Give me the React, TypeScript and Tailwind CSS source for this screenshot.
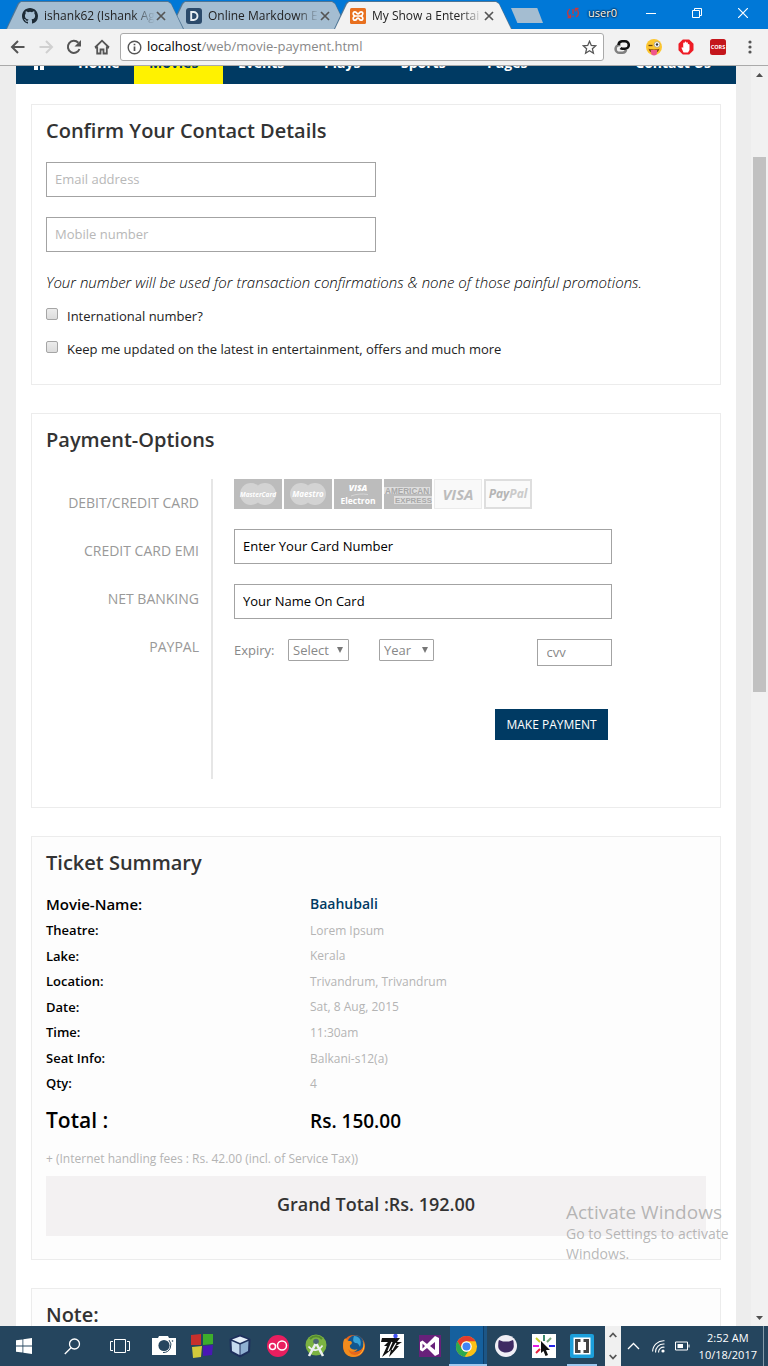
import React from "react";

const INPUT =
  "block h-[35px] border border-[#a3a3a3] bg-white px-2 pb-0.5 text-[13px] outline-none";

function Tab({
  title,
  active = false,
  className,
  icon,
}: {
  title: string;
  active?: boolean;
  className: string;
  icon: React.ReactNode;
}) {
  return (
    <div
      className={`relative mt-px h-7 w-[178px] shrink-0 bg-[#4f7594] p-px pb-0 [clip-path:polygon(0_100%,12px_2px,15px_0,162px_0,165px_2px,100%_100%)] ${className}`}
    >
      <div
        className={`flex h-full items-center pl-[15px] pr-4 [clip-path:polygon(0_100%,12px_2px,14px_0,161px_0,164px_2px,100%_100%)] ${
          active ? "bg-[#f2f2f2]" : "bg-[#a4bdd1]"
        }`}
      >
        {icon}
        <span className="ml-1.5 w-[111px] shrink-0 whitespace-nowrap font-['Open_Sans',sans-serif] text-xs text-[#222] [mask-image:linear-gradient(to_right,black_80%,transparent)]">
          {title}
        </span>
        <button aria-label={`Close ${title}`} className="ml-px shrink-0">
          <svg width="10" height="10" viewBox="0 0 10 10" stroke="#555" strokeWidth="1.7">
            <path d="M1 1l8 8M9 1l-8 8" />
          </svg>
        </button>
      </div>
    </div>
  );
}

const GithubIcon = () => (
  <svg className="shrink-0" width="16" height="16" viewBox="0 0 16 16" fill="#1d2b36">
    <path d="M8 0C3.58 0 0 3.58 0 8c0 3.54 2.29 6.53 5.47 7.59.4.07.55-.17.55-.38v-1.49c-2.01.37-2.53-.49-2.69-.94-.09-.23-.48-.94-.82-1.13-.28-.15-.68-.52-.01-.53.63-.01 1.08.58 1.23.82.72 1.21 1.87.87 2.33.66.07-.52.28-.87.51-1.07-1.78-.2-3.64-.89-3.64-3.95 0-.87.31-1.59.82-2.15-.08-.2-.36-1.02.08-2.12 0 0 .67-.21 2.2.82a7.6 7.6 0 0 1 4 0c1.53-1.04 2.2-.82 2.2-.82.44 1.1.16 1.92.08 2.12.51.56.82 1.27.82 2.15 0 3.07-1.87 3.75-3.65 3.95.29.25.54.73.54 1.48v2.2c0 .21.15.46.55.38A8 8 0 0 0 16 8c0-4.42-3.58-8-8-8z" />
  </svg>
);

const DillingerIcon = () => (
  <svg className="shrink-0" width="16" height="16" viewBox="0 0 16 16">
    <rect width="16" height="16" rx="3" fill="#2b4a6b" />
    <path d="M5.2 4v8h2.3a4 4 0 0 0 0-8z" fill="none" stroke="#e8eef3" strokeWidth="1.9" />
  </svg>
);

const XamppIcon = () => (
  <svg className="shrink-0" width="16" height="16" viewBox="0 0 16 16">
    <rect width="16" height="16" rx="1.500" fill="#e8701f" />
    <path
      d="M5.500 8H10.500M5.500 8C2.500 7.500 2.500 3.800 5 3.800C7 3.800 6.500 6 8 6S9 3.800 11 3.800C13.500 3.800 13.500 7.500 10.500 8C13.500 8.500 13.500 12.200 11 12.200C9 12.200 9.500 10 8 10S7 12.200 5 12.200C2.500 12.200 2.500 8.500 5.500 8z"
      fill="none"
      stroke="#fff"
      strokeWidth="1.700"
    />
  </svg>
);

function TitleBar() {
  return (
    <div className="flex h-[29px] shrink-0 overflow-hidden bg-[#0078d7] font-['Open_Sans',sans-serif]">
      <Tab className="z-10 ml-1.5" title="ishank62 (Ishank Ag" icon={<GithubIcon />} />
      <Tab className="-ml-[14px]" title="Online Markdown E" icon={<DillingerIcon />} />
      <Tab className="z-20 -ml-[14px]" active title="My Show a Entertai" icon={<XamppIcon />} />
      <button
        aria-label="New tab"
        className="mt-2 -ml-px h-[15px] w-8 shrink-0 bg-[#a4bdd1] [clip-path:polygon(0_0,82%_0,100%_100%,20%_100%)]"
      />
      <div className="ml-auto flex shrink-0 pr-0.5 pb-[3px]">
        <button className="flex items-center gap-2 pr-[11px] text-[11px] text-white [text-shadow:0_0_2px_#000,0_0_2px_#000]">
          <svg width="14" height="12" viewBox="0 0 14 12" fill="none" stroke="#c8383c" strokeWidth="1.4">
            <path d="M4 2a4.500 4.500 0 0 0 0 8M1.500 10.500h3V7.500M10 10a4.500 4.500 0 0 0 0-8M12.500 1.500h-3v3M7 2v5M7 8.500v1.500" />
          </svg>
          user0
        </button>
        <button aria-label="Minimize" className="flex w-[46px] items-center justify-center">
          <svg width="10" height="10" stroke="#fff"><path d="M0 5.500h10" /></svg>
        </button>
        <button aria-label="Restore" className="flex w-[46px] items-center justify-center">
          <svg width="10" height="10" fill="none" stroke="#fff"><path d="M.5 2.500h7v7h-7zM2.500 2.500v-2h7v7h-2" /></svg>
        </button>
        <button aria-label="Close" className="flex w-[46px] items-center justify-center">
          <svg width="10" height="10" fill="none" stroke="#fff" strokeWidth="1.200"><path d="M0 0l10 10M10 0L0 10" /></svg>
        </button>
      </div>
    </div>
  );
}

function ToolButton({ label, width = "w-7", children }: { label: string; width?: string; children: React.ReactNode }) {
  return (
    <button aria-label={label} className={`flex h-7 shrink-0 items-center justify-center ${width}`}>
      {children}
    </button>
  );
}

function Toolbar() {
  return (
    <div className="flex h-[37px] shrink-0 items-center border-b border-[#aaa] bg-[#f2f2f2] pl-1 pr-0.5 font-['Open_Sans',sans-serif]">
      <ToolButton label="Back">
        <svg width="16" height="16" fill="none" stroke="#555" strokeWidth="2"><path d="M14.500 8H2M8 2L2 8l6 6" /></svg>
      </ToolButton>
      <ToolButton label="Forward">
        <svg width="16" height="16" fill="none" stroke="#d0d0d0" strokeWidth="2"><path d="M1.500 8H14M8 2l6 6-6 6" /></svg>
      </ToolButton>
      <ToolButton label="Reload">
        <svg width="16" height="16" fill="none" stroke="#555" strokeWidth="2">
          <path d="M13.500 10A6 6 0 1 1 12.300 3.800" /><path d="M15 1v6.500H8.500z" fill="#555" stroke="none" />
        </svg>
      </ToolButton>
      <ToolButton label="Home">
        <svg width="18" height="16" fill="none" stroke="#555" strokeWidth="1.800"><path d="M2 8.500L9 1.700l7 6.800M2 8.500h2.200v6H7.500V10.500h3v4h3.300v-6H16" /></svg>
      </ToolButton>
      <div className="ml-1 mr-0.5 flex h-7 min-w-0 flex-1 items-center rounded-[3px] border border-[#aaa] bg-white px-1.5">
        <svg className="shrink-0" width="15" height="15" fill="none" stroke="#555" strokeWidth="1.400">
          <circle cx="7.500" cy="7.500" r="6.300" /><path d="M7.500 6.500v4.500M7.500 3.800v1.500" strokeWidth="1.700" />
        </svg>
        <p className="ml-[5px] flex-1 truncate text-[13px] text-[#888]">
          <span className="text-black">localhost</span>/web/movie-payment.html
        </p>
        <button aria-label="Bookmark">
          <svg width="15" height="15" viewBox="0 0 15 15" fill="none" stroke="#555" strokeWidth="1.300">
            <path d="M7.500 1.300l1.800 4.100 4.500.4-3.400 3 1 4.400-3.900-2.400-3.900 2.400 1-4.400-3.400-3 4.500-.4z" />
          </svg>
        </button>
      </div>
      <ToolButton label="Link extension" width="w-8">
        <svg width="16" height="16" fill="none" strokeWidth="2.600">
          <path d="M6.500 6H5.500a3.800 3.800 0 0 0 0 7.800H8.500a3.800 3.800 0 0 0 3.500-3" stroke="#808080" />
          <path d="M4.600 6A3.800 3.800 0 0 1 8 2.200h3a3.800 3.800 0 0 1 0 7.600H8.500a3 3 0 0 1-2-.8" stroke="#111" />
        </svg>
      </ToolButton>
      <ToolButton label="Emoji extension" width="w-8">
        <svg width="18" height="18">
          <circle cx="9" cy="9" r="8" fill="#fdc62f" />
          <path d="M3.500 10.500c2 1.200 9 1.200 11 0-.5 3-2.500 4.500-5.500 4.500s-5-1.500-5.500-4.500z" fill="#8a4a12" />
          <path d="M6 12h6v2.500a3 3 0 0 1-6 0z" fill="#f0568c" />
          <circle cx="12" cy="6.500" r="2.800" fill="#fff" stroke="#888" strokeWidth=".6" /><circle cx="12" cy="6.500" r="1.200" fill="#333" />
          <path d="M3.500 7.500h4" stroke="#6b4510" strokeWidth="1.300" />
        </svg>
      </ToolButton>
      <ToolButton label="Ad blocker" width="w-8">
        <svg width="16" height="16">
          <path d="M4.800.5h6.400l4.300 4.300v6.400l-4.300 4.300H4.800L.5 11.200V4.800z" fill="#ee1c25" />
          <path d="M5.500 13.500L3.500 9c0-1.200 1.200-1 1.700 0V4.500c0-1.200 1.500-1.200 1.500 0V3.400c0-1.200 1.600-1.200 1.600 0v.8c0-1.200 1.600-1.200 1.600 0v1.500c0-1.200 1.600-1 1.600.2v5L10 13.500z" fill="#fff" />
        </svg>
      </ToolButton>
      <ToolButton label="CORS extension" width="w-8">
        <svg width="16" height="16" className="font-['Open_Sans',sans-serif]">
          <rect width="16" height="16" rx="2.500" fill="#c4161c" />
          <text x="8" y="10" textAnchor="middle" fontSize="5.500" fontWeight="700" fill="#fff">CORS</text>
        </svg>
      </ToolButton>
      <ToolButton label="Menu" width="w-8">
        <svg width="4" height="14" fill="#555"><circle cx="2" cy="2" r="1.600" /><circle cx="2" cy="7" r="1.600" /><circle cx="2" cy="12" r="1.600" /></svg>
      </ToolButton>
    </div>
  );
}

function SiteNav() {
  const link = "pb-[11px]";
  return (
    <nav className="flex h-[18px] items-end overflow-hidden bg-[#003a63] text-sm leading-5 font-bold text-white">
      <a href="#home" aria-label="Start" className="w-[47px] pb-3.5 pl-4">
        <svg width="14" height="13" fill="#fff"><path d="M0 7l7-7 7 7h-2v6H8V9H6v4H2V7z" /></svg>
      </a>
      <a href="#home" className={`${link} w-[71px] pl-[15px]`}>Home</a>
      <a href="#movies" className={`${link} w-[89px] bg-[#fff200] pl-[15px] text-[#003a63]`}>Movies</a>
      <a href="#events" className={`${link} w-[86px] pl-[15px]`}>Events</a>
      <a href="#plays" className={`${link} w-[77px] pl-[15px]`}>Plays</a>
      <a href="#sports" className={`${link} w-[86px] pl-[15px]`}>Sports</a>
      <a href="#pages" className={`${link} pl-[15px]`}>Pages</a>
      <a href="#contact" className={`${link} ml-auto pr-[25px]`}>Contact Us</a>
    </nav>
  );
}

function Card({ title, className, children }: { title: string; className: string; children?: React.ReactNode }) {
  return (
    <section className={`border border-[#ececec] px-[14px] pt-[14px] ${className}`}>
      <h2 className="text-xl leading-6 font-semibold text-[#333]">{title}</h2>
      {children}
    </section>
  );
}

function Check({ id, label, className }: { id: string; label: string; className: string }) {
  return (
    <div className={`flex ${className}`}>
      <input
        id={id}
        type="checkbox"
        className="mt-0.5 mr-[9px] h-3 w-3 appearance-none rounded-[2px] border border-[#a5a5a5] bg-gradient-to-b from-[#ececec] to-[#dcdcdc]"
      />
      <label htmlFor={id} className="text-[13px] leading-5 text-[#222]">{label}</label>
    </div>
  );
}

function Select({ id, label, value, width }: { id: string; label: string; value: string; width: string }) {
  return (
    <div className={`relative h-[22px] ${width}`}>
      <select
        id={id}
        aria-label={label}
        className="block h-full w-full appearance-none rounded-[1px] border border-[#a3a3a3] bg-white pl-1 text-[13px] leading-5 text-[#888]"
      >
        <option>{value}</option>
      </select>
      <svg className="pointer-events-none absolute top-2 right-1.5" width="6" height="6" fill="#777"><path d="M0 0h6L3 6z" /></svg>
    </div>
  );
}

const LOGO_FONT = "font-['Open_Sans',sans-serif]";

function CardLogos() {
  return (
    <div className="flex gap-0.5">
      {["MasterCard", "Maestro"].map((name) => (
        <svg key={name} width="48" height="30" className={LOGO_FONT}>
          <rect width="48" height="30" fill="#bcbcbc" />
          <circle cx="17" cy="15" r="11" fill="#d3d3d3" /><circle cx="31" cy="15" r="11" fill="#d3d3d3" />
          <text x="24" y="18" textAnchor="middle" fontSize={name === "Maestro" ? 8 : 6.5} fontStyle="italic" fontWeight="700" fill="#fff">{name}</text>
        </svg>
      ))}
      <svg width="48" height="30" className={LOGO_FONT}>
        <rect width="48" height="30" fill="#bcbcbc" />
        <text x="24" y="12" textAnchor="middle" fontSize="8.500" fontStyle="italic" fontWeight="800" fill="#fff">VISA</text>
        <path d="M17 17c5-2 11-2.500 17-1.500" stroke="#d6d6d6" fill="none" />
        <text x="24" y="25" textAnchor="middle" fontSize="8.500" fontWeight="700" fill="#fff">Electron</text>
      </svg>
      <svg width="48" height="30" className="font-['Liberation_Sans',sans-serif]">
        <rect width="48" height="30" fill="#bcbcbc" />
        <path d="M0 8h46v7H0zM10 17h38v8H10z" fill="#dedede" />
        <text x="1" y="14.500" fontSize="8.200" fontWeight="700" fill="#a8a8a8">AMERICAN</text>
        <text x="11" y="24" fontSize="7.800" fontWeight="700" fill="#a8a8a8">EXPRESS</text>
      </svg>
      <svg width="48" height="30" className={LOGO_FONT}>
        <rect x=".5" y=".5" width="47" height="29" fill="#f9f9f9" stroke="#ebebeb" />
        <text x="24" y="20.500" textAnchor="middle" fontSize="15" fontStyle="italic" fontWeight="700" fill="#bcbcbc">VISA</text>
      </svg>
      <svg width="48" height="30" className={LOGO_FONT}>
        <rect x="1" y="1" width="46" height="28" fill="#fafafa" stroke="#dedede" strokeWidth="2" />
        <text x="24" y="19" textAnchor="middle" fontSize="12" fontStyle="italic" fontWeight="700" fill="#b5b5b5">Pay<tspan fill="#cacaca">Pal</tspan></text>
      </svg>
    </div>
  );
}

const METHODS = ["Debit/Credit Card", "Credit Card EMI", "Net Banking", "PayPal"];

function Payment() {
  return (
    <Card title="Payment-Options" className="mt-7 pb-7">
      <div className="mt-[27px] flex h-[300px]">
        <ul className="w-[167px] shrink-0 border-r-2 border-[#e6e6e6] pr-3 text-right text-sm uppercase text-[#999]">
          {METHODS.map((m) => (
            <li key={m} className="h-12 leading-[48px]">
              <a href="#method">{m}</a>
            </li>
          ))}
        </ul>
        <form className="min-w-0 flex-1 pl-[21px]">
          <CardLogos />
          <input aria-label="Card number" defaultValue="Enter Your Card Number" className={`${INPUT} mt-5 w-4/5 text-black`} />
          <input aria-label="Name on card" defaultValue="Your Name On Card" className={`${INPUT} mt-5 w-4/5 text-black`} />
          <div className="mt-5 flex w-4/5 items-start">
            <label htmlFor="month" className="w-[54px] text-[13px] leading-[22px] text-[#888]">Expiry:</label>
            <Select id="month" label="Expiry month" value="Select" width="w-[61px]" />
            <div className="w-[30px]" />
            <Select id="year" label="Expiry year" value="Year" width="w-[55px]" />
            <input aria-label="CVV" defaultValue="cvv" className="ml-auto h-[27px] w-[75px] border border-[#a3a3a3] bg-white px-[9px] pb-0.5 text-[13px] text-[#888]" />
          </div>
          <div className="mt-[43px] flex w-4/5 justify-end pr-1">
            <button type="button" className="h-[31px] bg-[#003a63] px-[11px] text-xs text-white">MAKE PAYMENT</button>
          </div>
        </form>
      </div>
    </Card>
  );
}

const DETAILS = [
  ["Theatre:", "Lorem Ipsum"],
  ["Lake:", "Kerala"],
  ["Location:", "Trivandrum, Trivandrum"],
  ["Date:", "Sat, 8 Aug, 2015"],
  ["Time:", "11:30am"],
  ["Seat Info:", "Balkani-s12(a)"],
  ["Qty:", "4"],
];

function Summary() {
  const row = "grid grid-cols-[2fr_3fr] items-center";
  return (
    <Card title="Ticket Summary" className="mt-7 bg-[#fdfdfd] pb-[23px]">
      <dl className="mt-[15px]">
        <div className={`${row} h-7`}>
          <dt className="text-[15px] font-semibold text-black">Movie-Name:</dt>
          <dd className="text-sm font-semibold text-[#003a63]">Baahubali</dd>
        </div>
        <div className="grid h-[179px] grid-rows-7">
          {DETAILS.map(([k, v]) => (
            <div key={k} className={row}>
              <dt className="text-[13px] font-semibold text-black">{k}</dt>
              <dd className="text-xs text-[#b4b4b4]">{v}</dd>
            </div>
          ))}
        </div>
        <div className={`${row} h-12 text-black`}>
          <dt className="text-[21px] font-semibold">Total :</dt>
          <dd className="text-[19px] font-semibold">Rs. 150.00</dd>
        </div>
      </dl>
      <p className="mt-1 text-xs leading-5 text-[#b4b4b4]">+ (Internet handling fees : Rs. 42.00 (incl. of Service Tax))</p>
      <p className="mt-[7px] h-[60px] bg-[#f3f1f2] text-center text-lg leading-[56px] font-semibold text-[#333]">Grand Total :Rs. 192.00</p>
    </Card>
  );
}

function Scrollbar() {
  return (
    <div aria-hidden="true" className="flex w-[17px] shrink-0 flex-col bg-[#f1f1f1] px-0.5">
      <svg width="13" height="17" fill="#505050"><path d="M3 11l3.500-4 3.500 4z" /></svg>
      <div className="flex flex-1 flex-col">
        <div className="h-[6%]" />
        <div className="h-[43.7%] bg-[#c1c1c1]" />
      </div>
      <svg width="13" height="17" fill="#505050"><path d="M3 7l3.500 4 3.500-4z" /></svg>
    </div>
  );
}

const APPS: { name: string; art: React.ReactNode }[] = [
  { name: "Camera", art: <><path d="M0 4h6l1-2h9l1 2h7v17H0z" fill="#fff" /><circle cx="12" cy="11.500" r="5.600" fill="#25455e" /><path d="M17 6a7.500 7.500 0 0 1-6 12.500" fill="none" stroke="#25455e" /><circle cx="20.500" cy="7" r=".8" fill="#25455e" /></> },
  { name: "Blocks", art: <><path d="M1 1l10-1v11H1z" fill="#c8302c" /><path d="M13 0h10v10l-10 1z" fill="#3dae2b" /><path d="M2 13l10-1-1 11-8 1z" fill="#d3ca3c" /><path d="M13 12l10-1-1 10-9 1z" fill="#4a17b5" /></> },
  { name: "VirtualBox", art: <><path d="M12 .5l10.500 4.500-.5 13L12 23.500 2 18l-.5-13z" fill="#1e2f5c" /><path d="M12 2.500l8 3L12 9 4 5.500z" fill="#e4eef8" /><path d="M3.500 7L11.500 10.500V21l-7.500-4z" fill="#c5d9ee" /><path d="M20.500 7l-8 3.500V21l7.500-4z" fill="#8fb0d2" /></> },
  { name: "oO", art: <><circle cx="12" cy="12" r="11" fill="#e91e5f" /><g fill="none" stroke="#fff" strokeWidth="1.500"><circle cx="6.500" cy="12.500" r="3" /><circle cx="16" cy="11.500" r="4.500" /></g></> },
  { name: "Android Studio", art: <><circle cx="12" cy="11" r="10.500" fill="#7cb342" /><path d="M6 5a8 8 0 0 1 12 0" stroke="#558b2f" strokeWidth="2" fill="none" /><circle cx="12" cy="7.500" r="2.800" fill="#4e6572" /><path d="M11.500 10L5 22M12.500 10l6.500 12" stroke="#eceff1" strokeWidth="2.600" /><path d="M4.500 12.500c4 5 10 5 14-1" stroke="#eceff1" strokeWidth="1.600" fill="none" /></> },
  { name: "Firefox", art: <><circle cx="12" cy="12" r="11" fill="#e8661b" /><circle cx="13.500" cy="9.500" r="8.200" fill="#13578f" /><path d="M12 2c6 0 8 5 6 11-1-2-2-4-4-4s-4-2-2-7z" fill="#37a2d8" /><path d="M1.500 7c1-3 2-3 3-2 0 1 1 2 3 2 2 0 3 1 2 3-2 1-2 2-1 4 2 2 5 2 7 1-2 4-8 3-9 0 1 7 8 7 12 4-5 7-16 4-17-4-.5-3-.5-6 0-8z" fill="#f28c1d" /><path d="M20 6c3.500 5 1 14-6 16 7-1 11-10 6-16z" fill="#ffd23b" /></> },
  { name: "Lightning", art: <><path d="M0 0h24v24H0z" fill="#fff" /><path d="M2 4h18l-3 4h5l-6 4h3L9 23l2-7-9 7 5-11H4l4-4H1z" fill="#111" /><path d="M12 8L8 17M16 9l-4 7" stroke="#fff" strokeWidth="1.300" /><circle cx="15.500" cy="2" r="2.200" fill="#4050f0" /></> },
  { name: "Visual Studio", art: <><path d="M1 1h22v22H1z" fill="#68217a" /><path fillRule="evenodd" d="M17 2l4 2v16l-4 2-8-8-4.500 3.500L2 16V8l2.500-1.500L9 10zM17 8l-5 4 5 4zM4.500 9.500v5L7 12z" fill="#fff" /></> },
  { name: "Chrome", art: <><circle cx="12" cy="12" r="11" fill="#fbc116" /><path d="M2.500 6.500A11 11 0 0 1 21.500 6.500H12a5.500 5.500 0 0 0-5 8z" fill="#e33b2e" /><path d="M2.500 6.500l5 8.500a5.500 5.500 0 0 0 6.500 2l-4 5.800A11 11 0 0 1 2.500 6.500z" fill="#2da94f" /><circle cx="12" cy="12" r="5.500" fill="#fff" /><circle cx="12" cy="12" r="4.200" fill="#4285f4" /></> },
  { name: "GitHub Desktop", art: <><circle cx="12" cy="12" r="11" fill="#f0eef5" /><path d="M5 6l4 1.500h6L19 6c1 2 .5 4 .8 6 0 4-3.500 6.500-7.800 6.500S4.200 16 4.200 12C4.500 10 4 8 5 6z" fill="#3f2a63" /></> },
  { name: "Click", art: <><path d="M0 0h24v24H0z" fill="#fff" /><g strokeWidth="2"><path d="M12 1v6" stroke="#3c8a6e" /><path d="M4 4l4 4" stroke="#c9cf28" /><path d="M19 4l-4 4" stroke="#75a878" /><path d="M1 12h6" stroke="#e51ce5" /><path d="M17 12h6" stroke="#2424e8" /><path d="M4 19l4-4" stroke="#e8203c" /></g><path d="M9 7l9 9h-4l2 5-2.500 1-2-5L9 19z" fill="#111" /></> },
  { name: "Brackets", art: <><rect width="24" height="24" rx="2" fill="#1c9fdb" /><path d="M3.500 3.500h17v17h-17z" fill="#fff" /><path d="M10.500 6.500H6.500v11h4M13.500 6.500h4v11h-4" fill="none" stroke="#444" strokeWidth="3" /></> },
];

function Taskbar() {
  const sys = "flex h-full w-12 shrink-0 items-center justify-center";
  return (
    <footer className="flex h-10 shrink-0 items-center bg-[#25455e] font-['Open_Sans',sans-serif]">
      <button aria-label="Start" className={sys}>
        <svg width="16" height="16" fill="#fff"><path d="M0 2.300l6.500-.9v6.200H0zM7.300 1.300L16 0v7.600H7.300zM0 8.400h6.500v6.200L0 13.700zM7.300 8.400H16V16l-8.700-1.200z" /></svg>
      </button>
      <button aria-label="Search" className={sys}>
        <svg width="17" height="17" fill="none" stroke="#fff" strokeWidth="1.300"><circle cx="10.500" cy="6" r="5" /><path d="M7 9.700L.8 16" /></svg>
      </button>
      <button aria-label="Task view" className={sys}>
        <svg width="20" height="14" fill="none" stroke="#fff"><path d="M4.500.5h11v13h-11zM3 2.500H.5v9H3M17 2.500h2.500v9H17" /></svg>
      </button>
      <div className="ml-px flex h-full">
        {APPS.map((app) => (
          <button
            key={app.name}
            aria-label={app.name}
            className={`flex h-full w-[38px] items-center justify-center border-b-2 ${
              app.name === "Chrome"
                ? "border-[#9cc9f0] bg-[linear-gradient(to_right,transparent_1px,#15609e_1px,#15609e_34px,#0e3f6b_34px,#0e3f6b_35px,#1d5686_35px)] pt-0.5 pr-1"
                : app.name === "Brackets"
                ? "border-[#9cc9f0] bg-clip-padding pt-0.5 [clip-path:inset(0_4px)]"
                : "border-transparent pt-0.5"
            }`}
          >
            <svg width="24" height="24" viewBox="0 0 24 24" className={app.name === "Chrome" ? "h-[23px] w-[23px]" : ""}>{app.art}</svg>
          </button>
        ))}
      </div>
      <button aria-label="More apps" className="ml-1 flex h-full w-4 flex-col items-center justify-between bg-[#f0f0f0] py-1.5">
        <svg width="8" height="6" fill="none" stroke="#555" strokeWidth="1.800"><path d="M.7 5L4 1.500 7.300 5" /></svg>
        <svg width="8" height="6" fill="none" stroke="#555" strokeWidth="1.800"><path d="M.7 1L4 4.500 7.300 1" /></svg>
      </button>
      <div className="flex flex-1 items-center pl-1.5 pr-1 text-white">
        <svg width="13" height="8" fill="none" stroke="#fff" strokeWidth="1.300"><path d="M1 7l5.500-5.500L12 7" /></svg>
        <svg className="ml-3" width="13" height="13" fill="none" stroke="#fff" strokeWidth="1.100">
          <path d="M.6 11.500A11 11 0 0 1 12.500.8M3.600 12.500A8 8 0 0 1 12.500 4M6.600 12.500a5 5 0 0 1 5.900-5.300" /><circle cx="11" cy="11" r="1.600" fill="#fff" stroke="none" />
        </svg>
        <svg className="ml-2.5" width="15" height="10" fill="none" stroke="#fff"><path d="M.5 1h12v8H.5zM14 3.500v3" /><path d="M2.500 3H8v4H2.500z" fill="#fff" stroke="none" /></svg>
        <p className="ml-auto text-center text-[11px] leading-[17px] whitespace-nowrap">
          2:52 AM
          <br />
          10/18/2017
        </p>
        <div className="ml-1.5 h-10 w-px bg-[#8499a8]" />
      </div>
    </footer>
  );
}

export default function App() {
  return (
    <div className="relative flex h-screen flex-col overflow-hidden bg-[#ededed] font-['Open_Sans',sans-serif]">
      <header>
        <TitleBar />
        <Toolbar />
      </header>
      <div className="flex min-h-0 flex-1">
        <main className="min-w-0 flex-1 overflow-hidden pr-[15px] pl-4">
          <div className="min-h-full bg-white">
            <SiteNav />
            <div className="px-[15px] pt-5">
              <Card title="Confirm Your Contact Details" className="pb-[25px]">
                <input aria-label="Email address" type="email" placeholder="Email address" className={`${INPUT} mt-[19px] w-1/2 placeholder:text-[#b8b8b8]`} />
                <input aria-label="Mobile number" type="tel" placeholder="Mobile number" className={`${INPUT} mt-5 w-1/2 placeholder:text-[#b8b8b8]`} />
                <p className="mt-5 text-[15px] leading-5 font-light text-black italic">
                  Your number will be used for transaction confirmations &amp; none of those painful promotions.
                </p>
                <Check id="intl" label="International number?" className="mt-[14px]" />
                <Check id="news" label="Keep me updated on the latest in entertainment, offers and much more" className="mt-[13px]" />
              </Card>
              <Payment />
              <Summary />
              <Card title="Note:" className="mt-7 bg-[#fdfdfd] pb-10" />
            </div>
          </div>
        </main>
        <Scrollbar />
      </div>
      <Taskbar />
      <div className="pointer-events-none absolute right-6 bottom-[102px] w-[178px] text-[#999]/70">
        <p className="text-[19px] leading-6">Activate Windows</p>
        <p className="text-sm leading-5">Go to Settings to activate Windows.</p>
      </div>
    </div>
  );
}
